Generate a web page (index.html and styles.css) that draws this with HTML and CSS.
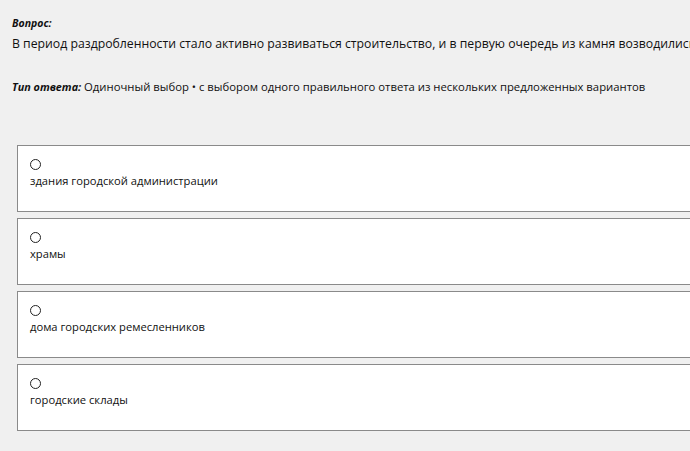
FILE: index.html
```html
<!DOCTYPE html>
<html lang="ru">
<head>
<meta charset="UTF-8">
<title>Вопрос</title>
<link rel="stylesheet" href="styles.css">
</head>
<body>
<div class="question">
    <div class="label">Вопрос:</div>
    <div class="text">В период раздробленности стало активно развиваться строительство, и в первую очередь из камня возводились</div>
</div>
<div class="answer-type">
    <span class="label">Тип ответа:</span> Одиночный выбор • с выбором одного правильного ответа из нескольких предложенных вариантов
</div>
<div class="options">
    <label class="option">
        <span class="radio"></span>
        <span class="option-text">здания городской администрации</span>
    </label>
    <label class="option">
        <span class="radio"></span>
        <span class="option-text">храмы</span>
    </label>
    <label class="option">
        <span class="radio"></span>
        <span class="option-text">дома городских ремесленников</span>
    </label>
    <label class="option">
        <span class="radio"></span>
        <span class="option-text">городские склады</span>
    </label>
</div>
</body>
</html>
```

FILE: styles.css
```css
* { margin: 0; padding: 0; box-sizing: border-box; }
body {
    background: #f0f0f0;
    font-family: "Open Sans", "Noto Sans", sans-serif;
    color: #111;
    padding: 16px 0 0 12px;
    overflow: hidden;
    width: 690px;
}
.label {
    font-weight: bold;
    font-style: italic;
    font-size: 10.5px;
}
.question .text {
    font-size: 12.25px;
    margin-top: 5px;
    white-space: nowrap;
}
.answer-type {
    font-size: 11.3px;
    margin-top: 27px;
    white-space: nowrap;
}
.answer-type .label { font-size: 10.8px; }
.options {
    margin-top: 51px;
    margin-left: 5px;
    display: flex;
    flex-direction: column;
    gap: 6px;
    width: 700px;
}
.option {
    display: flex;
    flex-direction: column;
    align-items: flex-start;
    height: 67px;
    background: #fff;
    border: 1px solid #8a8a8a;
    padding: 13px 12px;
}
.radio {
    width: 11px;
    height: 11px;
    border: 1px solid #222;
    border-radius: 50%;
}
.option-text {
    font-size: 11.2px;
    margin-top: 3px;
}
```
